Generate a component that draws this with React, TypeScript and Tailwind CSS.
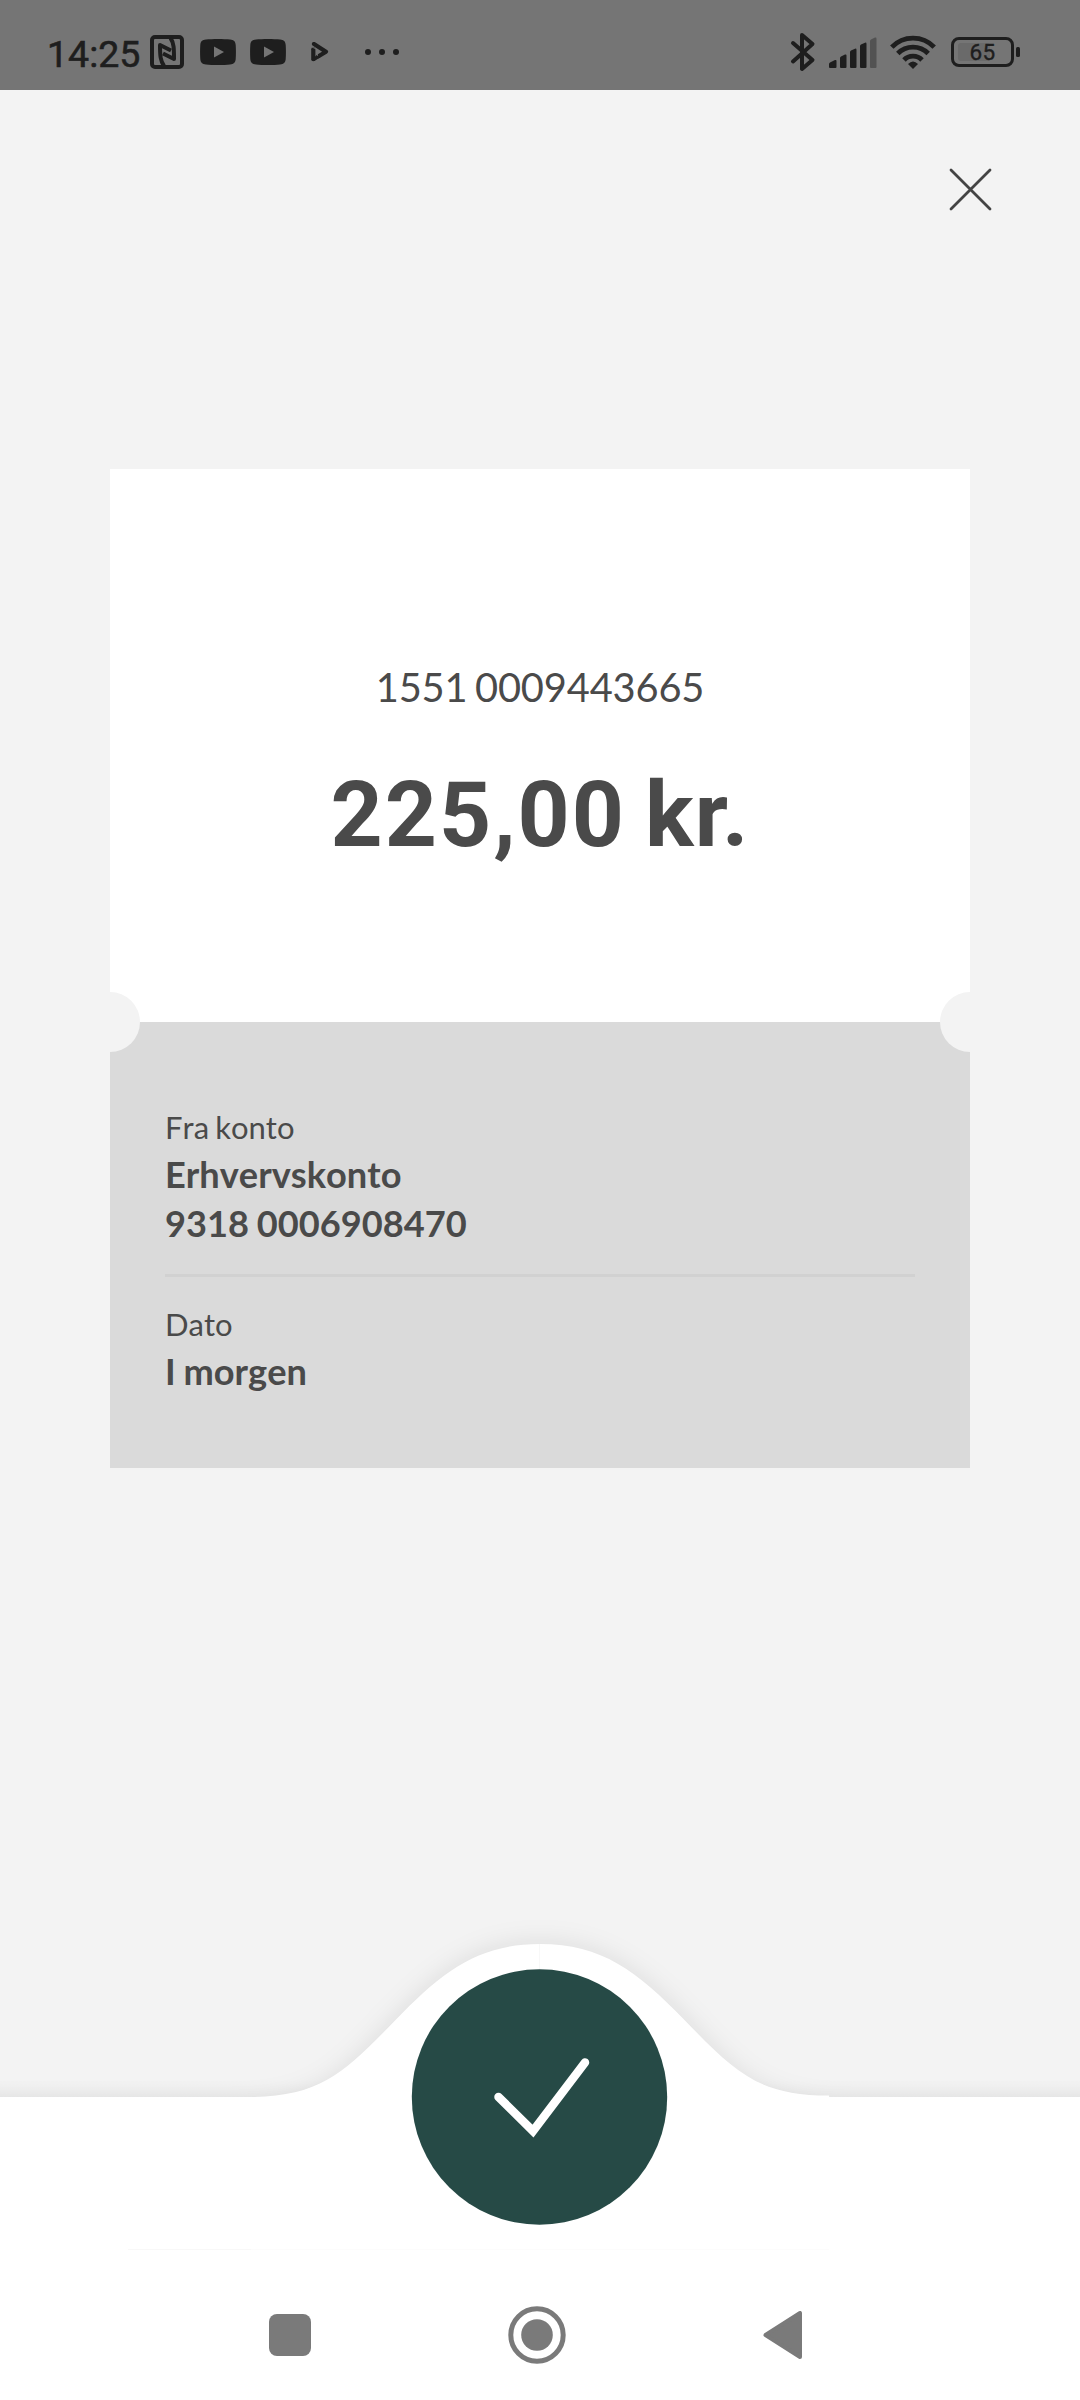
import React from "react";

const INK = "#1e1e1e";

function NfcIcon() {
  return (
    <svg className="block h-[34px] w-[34px]" viewBox="0 0 34 34" fill="none">
      <rect x="2" y="2" width="30" height="30" rx="3" stroke={INK} strokeWidth="4" />
      <path d="M14 31C10.500 26 10 21 10 10L21 15.500" stroke={INK} strokeWidth="4" strokeLinejoin="round" />
      <path d="M20.500 3C24 8 24 14 24 24L13 18.500" stroke={INK} strokeWidth="4" strokeLinejoin="round" />
    </svg>
  );
}

function VideoIcon() {
  return (
    <svg className="block h-[26px] w-9" viewBox="0 0 36 26">
      <path d="M6 .6C12 -.1 24 -.1 30 .6C34 1 35.400 2.500 35.700 6C36 10 36 16 35.700 20C35.400 23.500 34 25 30 25.400C24 26.100 12 26.100 6 25.400C2 25 .6 23.500 .3 20C0 16 0 10 .3 6C.6 2.500 2 1 6 .6Z" fill={INK} />
      <path d="M14 7.500L24 13L14 18.500Z" fill="#757575" />
    </svg>
  );
}

function PlayMark() {
  return (
    <svg className="block h-5 w-[18px]" viewBox="0 0 18 20" fill="none" stroke={INK} strokeLinecap="round" strokeLinejoin="round">
      <path d="M3 2L15 9.700L7.500 14.300" strokeWidth="4.200" />
      <path d="M2.300 7.300V17.200" strokeWidth="4.200" />
      <path d="M3 17.200L8 14" strokeWidth="3.400" />
      <path d="M.8 4.800L6.500 8V13.500" stroke="#757575" strokeWidth=".8" />
    </svg>
  );
}

function BluetoothIcon() {
  return (
    <svg className="block h-10 w-[26px]" viewBox="0 0 26 40" fill="none" stroke={INK} strokeWidth="4" strokeLinecap="round" strokeLinejoin="round">
      <path d="M3 11L22.500 28L12 37V3L22.500 12L3 29.500" />
    </svg>
  );
}

function SignalIcon() {
  return (
    <svg className="block h-8 w-12" viewBox="0 0 48 32" fill={INK}>
      <path d="M0 30V27Q0 26 1 25.500L6 23Q7.500 22.500 7.500 24V30Q7.500 31 6.500 31H1Q0 31 0 30Z" />
      <path d="M11 30V21Q11 20 12 19.500L16 17.500Q17.500 17 17.500 18.500V30Q17.500 31 16.500 31H12Q11 31 11 30Z" />
      <path d="M21 30V15Q21 14 22 13.500L26 11.700Q27.500 11.300 27.500 13V30Q27.500 31 26.500 31H22Q21 31 21 30Z" />
      <path d="M31 30V9Q31 8 32 7.500L36 5.700Q37.500 5.300 37.500 7V30Q37.500 31 36.500 31H32Q31 31 31 30Z" />
      <path d="M41 30V4Q41 3 42 2.500L46 .6Q47.500 .3 47.500 2V30Q47.500 31 46.500 31H42Q41 31 41 30Z" fill="#525252" />
    </svg>
  );
}

function WifiIcon() {
  return (
    <svg className="block h-[34px] w-[46px]" viewBox="0 0 46 34" fill="none" stroke={INK} strokeWidth="4.800">
      <path d="M1.800 12.200Q10.500 3.200 23 3.200T44.200 12.200" />
      <path d="M7.800 18.500Q14 12.200 23 12.200T38.200 18.500" />
      <path d="M14 25Q17.500 21.200 23 21.200T32 25" />
      <path d="M18 29Q20.500 26.500 23 26.500T28 29L23 34Z" fill={INK} stroke="none" />
    </svg>
  );
}

function Battery() {
  return (
    <div className="flex items-center gap-[2px]">
      <div className="relative flex h-[30px] w-[63px] items-center justify-center rounded-[8px] border-[3px] border-[#1e1e1e]">
        <div className="absolute left-[4px] top-[3px] h-[18px] w-[32px] rounded-[3px] bg-[#6a6a6a]" />
        <span className="relative font-['Roboto',sans-serif] text-[22.500px] tracking-[.3px] leading-[24px] text-[#1e1e1e] [-webkit-text-stroke:.4px_#1e1e1e]">65</span>
      </div>
      <div className="h-[10px] w-1 rounded-[1.500px] bg-[#1e1e1e]" />
    </div>
  );
}

function StatusBar() {
  return (
    <header className="flex h-[90px] w-full items-start bg-[#757575] text-[#1e1e1e]">
      <span className="ml-[47px] mt-[32px] w-[95px] whitespace-nowrap font-['Roboto',sans-serif] text-[37.500px] leading-[44px] [-webkit-text-stroke:.6px_#1e1e1e]">14:25</span>
      <div className="ml-[8px] mt-[35px]"><NfcIcon /></div>
      <div className="ml-4 mt-[39px]"><VideoIcon /></div>
      <div className="ml-[14px] mt-[39px]"><VideoIcon /></div>
      <div className="ml-[25px] mt-[42px]"><PlayMark /></div>
      <div className="ml-[36px] mt-[49px] flex gap-2">
        <i className="size-[6px] rounded-full bg-[#1e1e1e]" />
        <i className="size-[6px] rounded-full bg-[#1e1e1e]" />
        <i className="size-[6px] rounded-full bg-[#1e1e1e]" />
      </div>
      <div className="ml-auto mt-[32px]"><BluetoothIcon /></div>
      <div className="ml-[13px] mt-[37px]"><SignalIcon /></div>
      <div className="ml-[13px] mt-[35px]"><WifiIcon /></div>
      <div className="ml-[15px] mr-[60px] mt-[37px]"><Battery /></div>
    </header>
  );
}

function ReceiptCard() {
  return (
    <section className="relative mx-[110px] mt-[258px] h-[999px] overflow-hidden">
      <div className="flex h-[553px] flex-col items-center bg-white pt-[194px]">
        <p className="whitespace-nowrap text-[39.800px] leading-[48px] tracking-[-.15px] [word-spacing:-2.500px]">1551 0009443665</p>
        <h1 className="mt-[51px] flex whitespace-nowrap font-['Roboto',sans-serif] text-[91px] font-bold leading-[107px]">
          <span className="tracking-[2px]">225,00</span>
          <span className="ml-[19px] tracking-[1px]">kr.</span>
        </h1>
      </div>
      <div className="h-[446px] bg-[#dadada] px-[55px] pt-[86px] [font-kerning:none]">
        <p className="text-[31px] leading-[38px] [word-spacing:-2px]">Fra konto</p>
        <p className="mt-[4px] text-[36.200px] font-bold leading-[49px]">Erhvervskonto</p>
        <p className="text-[36.200px] font-bold leading-[49px] [word-spacing:-1px]">9318 0006908470</p>
        <div className="mt-[26px] h-[3px] bg-[#d1d1d1]" />
        <p className="mt-[28px] text-[31px] leading-[38px]">Dato</p>
        <p className="mt-[4px] text-[36.200px] font-bold leading-[49px] [word-spacing:-1px]">I morgen</p>
      </div>
      <div className="absolute -left-[30px] top-[523px] size-[60px] rounded-full bg-[#f3f3f3]" />
      <div className="absolute -right-[30px] top-[523px] size-[60px] rounded-full bg-[#f3f3f3]" />
    </section>
  );
}

// Bottom sheet outline with the hump around the confirmation button.
function ConfirmWave() {
  return (
    <svg className="block h-[350px] w-[1080px]" viewBox="0 0 1080 350" fill="none">
      <defs>
        <filter id="soft" x="-100" y="-60" width="1280" height="460" filterUnits="userSpaceOnUse">
          <feGaussianBlur stdDeviation="13" />
        </filter>
        <linearGradient id="edge" x1="0" y1="180" x2="0" y2="197" gradientUnits="userSpaceOnUse">
          <stop offset="0" stopColor="#000" stopOpacity="0" />
          <stop offset="1" stopColor="#000" stopOpacity=".03" />
        </linearGradient>
      </defs>
      <path
        d="M-80 206H231C322 206 345 172 395.500 120C443 71 478 44 540 44C602 44 637 71 684.500 120C735 172 758 206 849 206H1160V380H-80Z"
        fill="#000"
        fillOpacity=".1"
        filter="url(#soft)"
      />
      <path d="M0 180H1080V198H0Z" fill="url(#edge)" />
      <path
        d="M0 197H251C322 196 345 172 395.500 120C443 71 478 44 540 44C602 44 637 71 684.500 120C735 172 758 195.500 829 195.500V197H1080V350H0Z"
        fill="#fff"
      />
      <path d="M128 349.500H251" stroke="#f8f8f8" />
      <path d="M251 349.500H829" stroke="#fcfcfc" />
      <path d="M539.500 44V70" stroke="#f8f8f8" />
      <circle cx="539.500" cy="197" r="127.700" fill="#264a46" />
      <path d="M498.500 197L533 231L585 162.500" stroke="#fff" strokeWidth="8.500" strokeLinecap="round" />
    </svg>
  );
}

function NavigationBar() {
  return (
    <nav className="flex h-[150px] items-center bg-white pl-[269px] pt-[20px]">
      <div className="size-[42px] rounded-[8px] bg-[#7a7a7a]" />
      <svg className="ml-[197px] block size-[58px]" viewBox="0 0 58 58" fill="none">
        <circle cx="29" cy="29" r="26.200" stroke="#7a7a7a" strokeWidth="5" />
        <circle cx="29" cy="29" r="15.800" fill="#7a7a7a" />
      </svg>
      <svg className="ml-[197px] block h-12 w-[39px]" viewBox="0 0 39 48">
        <path d="M2.500 24L37 2V46Z" fill="#7a7a7a" stroke="#7a7a7a" strokeWidth="4" strokeLinejoin="round" />
      </svg>
    </nav>
  );
}

export default function App() {
  return (
    <main className="flex h-[2400px] w-[1080px] flex-col overflow-hidden bg-[#f3f3f3] font-['Lato',sans-serif] text-[#4a4a4a]">
      <StatusBar />
      <div className="flex justify-end pr-[88px] pt-[78px]">
        <button aria-label="Luk" className="block">
          <svg className="block h-[43px] w-[43px]" viewBox="0 0 43 43" stroke="#444" strokeWidth="2.800" strokeLinecap="round">
            <path d="M2 2L41 41M41 2L2 41" />
          </svg>
        </button>
      </div>
      <ReceiptCard />
      <div className="mt-auto">
        <ConfirmWave />
        <NavigationBar />
      </div>
    </main>
  );
}
